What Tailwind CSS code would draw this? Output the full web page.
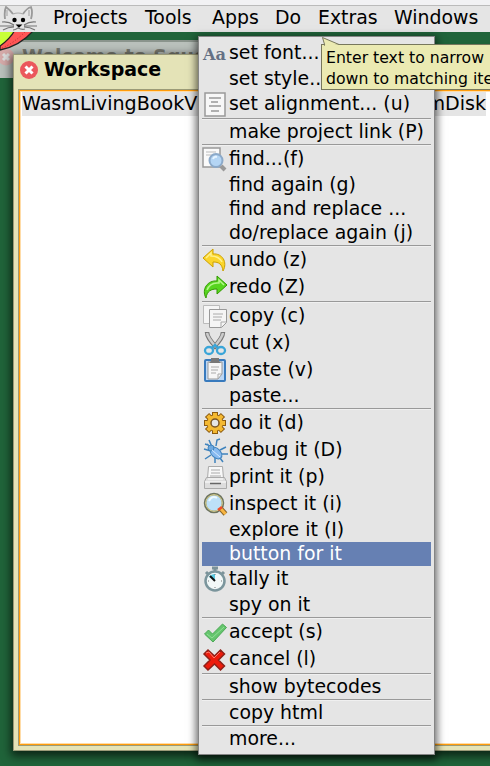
<!DOCTYPE html>
<html lang="en"><head><meta charset="utf-8"><title>Workspace</title>
<script src="https://cdn.jsdelivr.net/npm/@tailwindcss/browser@4"></script></head>
<body class="w-[490px] h-[766px] overflow-hidden">
<div class="relative w-[490px] h-[766px] overflow-hidden bg-[#20643a] text-black font-['DejaVu_Sans',sans-serif] text-[18.9px] whitespace-nowrap">
<!-- background window -->
<div class="absolute left-0 top-[40px] w-[300px] h-[38px] bg-[#c3c6c3]/95 border-t-2 border-[#8a948c] overflow-hidden">
<svg class="absolute left-[-1px] top-[6px]" width="18" height="18"><circle cx="7" cy="9" r="8.5" fill="#d5aaa9"/><path d="M4 6l6 6m0-6l-6 6" stroke="#ddd" stroke-width="3"/></svg>
<div class="absolute left-[22px] top-[2px] leading-[24px] font-bold text-[18.9px] text-[#77786f]">Welcome to Squeak</div></div>
<!-- desktop logo -->
<svg class="absolute left-0 top-[30px]" width="36" height="24"><path d="M0 0H34Q20 16 0 20Z" fill="#ff5656" stroke="#222" stroke-width="1.300"/><path d="M0 0H15Q10 9 0 16Z" fill="#c8ff38"/><path d="M15 0Q10 9 0 16" stroke="#222" fill="none" stroke-width="1.300"/><path d="M25 2Q14 13 2 18" stroke="#a33" stroke-dasharray="1 2" fill="none"/></svg>
<!-- menu bar -->
<header class="absolute left-0 top-0 w-[490px] h-[32px] bg-[#e5e5e5]">
<div class="h-[6px] bg-[#f2f2f4] border-b border-[#bbb]"></div>
<div class="relative h-[26px] leading-[23px]">
<svg class="absolute left-0 top-0" width="38" height="25" fill="none" stroke="#777" stroke-width="1.200"><path d="M5 13Q4 5 6 1q4 3 7 7M23 8q4-6 8-7q2 5 0 12" stroke="#999" stroke-width="1.800"/><path d="M7 4v6M13 8q5-2 10 0M29 4v6" stroke="#aaa"/><path d="M2 16q6-1 12 3M0 20l14 0M3 24q5-3 11-3M36 16q-6-1-12 3M37 20l-13 0M35 24q-5-3-11-3"/><path d="M13 24q2 0 5-2q4 2 7 1"/><circle cx="14.500" cy="14" r="2.200" fill="#000" stroke="none"/><circle cx="23" cy="14" r="2.200" fill="#000" stroke="none"/><path d="M17 19h4l-2 2z" fill="#000" stroke="#000"/></svg>
<nav class="flex pl-[53px] w-[600px]"><span class="w-[92px]">Projects</span><span class="w-[67px]">Tools</span><span class="w-[63px]">Apps</span><span class="w-[43px]">Do</span><span class="w-[76px]">Extras</span><span>Windows</span></nav></div></header>
<!-- workspace window -->
<main class="absolute left-[13px] top-[54px] w-[490px] h-[697px] bg-[#e4e3b7] border border-[#9b9b78] shadow-[0_3px_9px_2px_rgba(0,0,0,.65)] flex flex-col">
<div class="h-[34px] flex items-start pl-[5px] pt-[6px]">
<svg width="20" height="20" viewBox="0 0 20 20"><circle cx="10" cy="9" r="9" fill="#eb575c"/><path d="M6.500 5.500l7 7m0-7l-7 7" stroke="#fff" stroke-width="3"/></svg>
<h1 class="font-bold text-[19px] leading-[20px] pl-[5px] mt-[-2px]">Workspace</h1></div>
<div class="ml-[4px] w-[490px] h-[657px] border border-[#9b9b78] bg-white"><div class="h-full border border-[#ff9c0b]"><div class="h-full border border-[#ffdca8] pl-px"><div class="w-[464px] h-[24px] bg-[#e5e5e5] leading-[24px] text-[19.1px] flex justify-between"><span>WasmLivingBookV</span><span>mDisk</span></div></div></div></div>
</main>
<!-- context menu -->
<div class="absolute left-[198px] top-[36px] w-[237px] h-[719px] bg-[#e5e5e5] border border-[#858585] shadow-[0_3px_8px_2px_rgba(0,0,0,.6)] pl-[3px] pr-[3px] pt-[3px] leading-[22px]">
<div class="h-[27px] flex"><svg width="27" height="27"><text x="1" y="19.500" font-family="DejaVu Serif" font-weight="bold" font-size="17" textLength="23" lengthAdjust="spacingAndGlyphs" fill="#647084">Aa</text></svg><span class="pt-px">set font...</span></div>
<div class="h-[24px] pl-[27px]">set style...</div>
<div class="h-[27px] flex"><svg width="27" height="27"><rect x="3" y="2" width="20" height="23" fill="#f7f7f7" stroke="#999" stroke-width="1.5"/><path d="M7 7h12M9 11h7M7 15h12M9 20h8" stroke="#999" stroke-width="1.300"/></svg><span class="pt-px">set alignment... (u)</span></div>
<hr class="h-[2px] border-0 bg-[#f0f0f0] border-t border-[#999]">
<div class="h-[24px] pl-[27px]">make project link (P)</div>
<hr class="h-[2px] border-0 bg-[#f0f0f0] border-t border-[#999]">
<div class="h-[27px] flex"><svg width="27" height="27"><rect x="1" y="2" width="17" height="19" fill="#fafafa" stroke="#999" stroke-width="1.500"/><path d="M4 6h10M4 9h7" stroke="#bbb"/><circle cx="14" cy="14.500" r="6.500" fill="#b4d5f4" stroke="#8ba9c9" stroke-width="2"/><path d="M11 13q1-3 4-2" stroke="#e6f4ff" stroke-width="2" fill="none"/><path d="M19 20l4 4" stroke="#999" stroke-width="4"/></svg><span class="pt-px">find...(f)</span></div>
<div class="h-[24px] pl-[27px]">find again (g)</div>
<div class="h-[24px] pl-[27px]">find and replace ...</div>
<div class="h-[24px] pl-[27px]">do/replace again (j)</div>
<hr class="h-[2px] border-0 bg-[#f0f0f0] border-t border-[#999]">
<div class="h-[27px] flex"><svg width="27" height="27"><path d="M1 11L11 2V7C20 6 26 15 21 24C20 17 17 15 11 15V20Z" fill="#fbd52b" stroke="#cca000"/><path d="M4 11L9 6V9Q17 9 20 15" fill="none" stroke="#fff18a" stroke-width="1.500"/></svg><span class="pt-px">undo (z)</span></div>
<div class="h-[27px] flex"><svg width="27" height="27"><path d="M25 11L15 2V7C6 6-1 15 4 24C5 17 9 15 15 15V20Z" fill="#57d51f" stroke="#329900"/><path d="M22 11L17 6V9Q8 8 5 16" fill="none" stroke="#b5f78b" stroke-width="1.500"/></svg><span class="pt-px">redo (Z)</span></div>
<hr class="h-[2px] border-0 bg-[#f0f0f0] border-t border-[#999]">
<div class="h-[27px] flex"><svg width="27" height="27" fill="#f5f5f5" stroke="#aaa"><path d="M1.500 2.500h16v18h-16z" stroke="#bbb"/><path d="M7.500 6.500h17v13l-5 5h-12z" stroke="#999"/><path d="M24 19h-5v5M11 11h10M11 14h9M11 17h8"/></svg><span class="pt-px">copy (c)</span></div>
<div class="h-[27px] flex"><svg width="27" height="27"><path d="M5 2q0 6 10 16M21 2q0 6-10 16" stroke="#777" stroke-width="4.500" fill="none"/><path d="M5 3q1 5 9 14M21 3q-1 5-9 14" stroke="#ccc" stroke-width="2.500" fill="none"/><g fill="none" stroke="#3aa5d8" stroke-width="2.300"><ellipse cx="7" cy="20.500" rx="4" ry="3.500"/><ellipse cx="19" cy="20.500" rx="4" ry="3.500"/><path d="M10 18l3-3 3 3"/></g></svg><span class="pt-px">cut (x)</span></div>
<div class="h-[27px] flex"><svg width="27" height="27"><rect x="3" y="3" width="20" height="21" rx="1" fill="#bcd7f5" stroke="#387abd" stroke-width="2"/><path d="M6 5h14v12l-4 5H6z" fill="#f6f6f6" stroke="#999"/><path d="M9 4V1h8v3l2 2H7z" fill="#777"/><path d="M9 10h8M9 13h7M9 16h5M20 17h-4v5" fill="none" stroke="#aaa"/></svg><span class="pt-px">paste (v)</span></div>
<div class="h-[24px] pl-[27px]">paste...</div>
<hr class="h-[2px] border-0 bg-[#f0f0f0] border-t border-[#999]">
<div class="h-[27px] flex"><svg width="27" height="27"><g transform="translate(13 13)"><g stroke="#8c5b10" stroke-width="6"><path d="M0-11V11M-11 0H11M-8-8L8 8M-8 8L8-8"/></g><circle r="8.500" fill="#8c5b10"/><g stroke="#f4b932" stroke-width="4"><path d="M0-10V10M-10 0H10M-7.300-7.300L7.300 7.300M-7.300 7.300L7.300-7.300"/></g><circle r="7.800" fill="#f4b932"/><circle r="4" fill="#e5e5e5" stroke="#795525" stroke-width="1.500"/></g></svg><span class="pt-px">do it (d)</span></div>
<div class="h-[27px] flex"><svg width="27" height="27"><g fill="none" stroke="#3f83bd" stroke-width="1.500"><path d="M10 10L7 3M14 9l1-6 3-1M18 13l6-3M9 14l-7-2M9 18l-6 4M20 17h6M13 21v5M18 21l3 4M5 7l5 4M3 7l3 1"/></g><ellipse cx="14" cy="16" rx="4.500" ry="7" transform="rotate(-45 14 16)" fill="#88baf0" stroke="#3f83bd"/><circle cx="9" cy="11" r="3" fill="#6da8df" stroke="#3f83bd"/><path d="M10 13l8 7" stroke="#d5eaff"/></svg><span class="pt-px">debug it (D)</span></div>
<div class="h-[27px] flex"><svg width="27" height="27" stroke="#aaa" fill="#f8f8f8"><path d="M6.500 2.500h14l1 12h-16z"/><path d="M9 6h9M9 9h9M8 12h11"/><path d="M4.500 13.500h18l2 4v7h-22v-7z" fill="#ddd"/><path d="M6 15h15M3 18h21" stroke="#fff"/><path d="M8 19.500h11" stroke="#666" stroke-width="1.500"/></svg><span class="pt-px">print it (p)</span></div>
<div class="h-[27px] flex"><svg width="27" height="27"><circle cx="12" cy="12" r="9" fill="#bde0f8" stroke="#6d7460" stroke-width="2.500"/><circle cx="12" cy="12" r="8.300" fill="none" stroke="#e5d991"/><path d="M7 10q3-6 8-3" fill="none" stroke="#edf9ff" stroke-width="2"/><path d="M19 18l4.500 5" stroke="#896529" stroke-width="5"/><path d="M19 18l4.500 5" stroke="#f8b541" stroke-width="3"/><path d="M16 19l4-3" stroke="#f04d28" stroke-width="2.500"/></svg><span class="pt-px">inspect it (i)</span></div>
<div class="h-[24px] pl-[27px]">explore it (I)</div>
<div class="h-[24px] pl-[27px] bg-[#6680b3] text-white">button for it</div>
<div class="h-[27px] flex"><svg width="27" height="27"><path d="M10 2h6M13 2v4M4 6l3 3M22 6l-3 3" stroke="#7b9299" stroke-width="3"/><circle cx="13" cy="15" r="9.500" fill="#f2f8f8" stroke="#7b959c" stroke-width="2.500"/><path d="M13 15V8Q9 8 7 11z" fill="#58c8e0"/><path d="M13 15L8 10" stroke="#111" stroke-width="2"/><path d="M13 8v1M13 21v1M6 15h1M19 15h1" stroke="#777"/></svg><span class="pt-px">tally it</span></div>
<div class="h-[24px] pl-[27px]">spy on it</div>
<hr class="h-[2px] border-0 bg-[#f0f0f0] border-t border-[#999]">
<div class="h-[27px] flex"><svg width="27" height="27"><path d="M2.500 15l4-4 4 4L20.500 5l4 3.500L11 23z" fill="#65c56d" stroke="#4ba955"/><path d="M5 15l5 4L22 8" fill="none" stroke="#91df96"/></svg><span class="pt-px">accept (s)</span></div>
<div class="h-[27px] flex"><svg width="27" height="27"><path d="M6 4l6.500 6 6-6 4 4-6 6 6 6-4 4-6-6-6.500 6-4-4 6-6-6-6z" fill="#ed1b0c" stroke="#8e2018" stroke-width="1.500"/><path d="M4 7l3-1 5 6 6-6" fill="none" stroke="#ff7668"/></svg><span class="pt-px">cancel (l)</span></div>
<hr class="h-[2px] border-0 bg-[#f0f0f0] border-t border-[#999]">
<div class="h-[24px] pl-[27px]">show bytecodes</div>
<hr class="h-[2px] border-0 bg-[#f0f0f0] border-t border-[#999]">
<div class="h-[24px] pl-[27px]">copy html</div>
<hr class="h-[2px] border-0 bg-[#f0f0f0] border-t border-[#999]">
<div class="h-[24px] pl-[27px]">more...</div>
</div>
<!-- search hint -->
<div class="absolute left-[321px] top-[44px] w-[200px] h-[46px] bg-[#ebeab2] border border-[#77775c] pl-[4px] pt-[2px] text-[15.7px] leading-[21px]">
<svg class="absolute left-0 top-[-8px]" width="22" height="10"><path d="M3 9L0.500 0.500L17 7.500" fill="#ebeab2" stroke="#77775c"/><path d="M3 8h14v2H3z" fill="#ebeab2"/></svg>
<div>Enter text to narrow</div><div>down to matching items</div></div>
</div></body></html>
